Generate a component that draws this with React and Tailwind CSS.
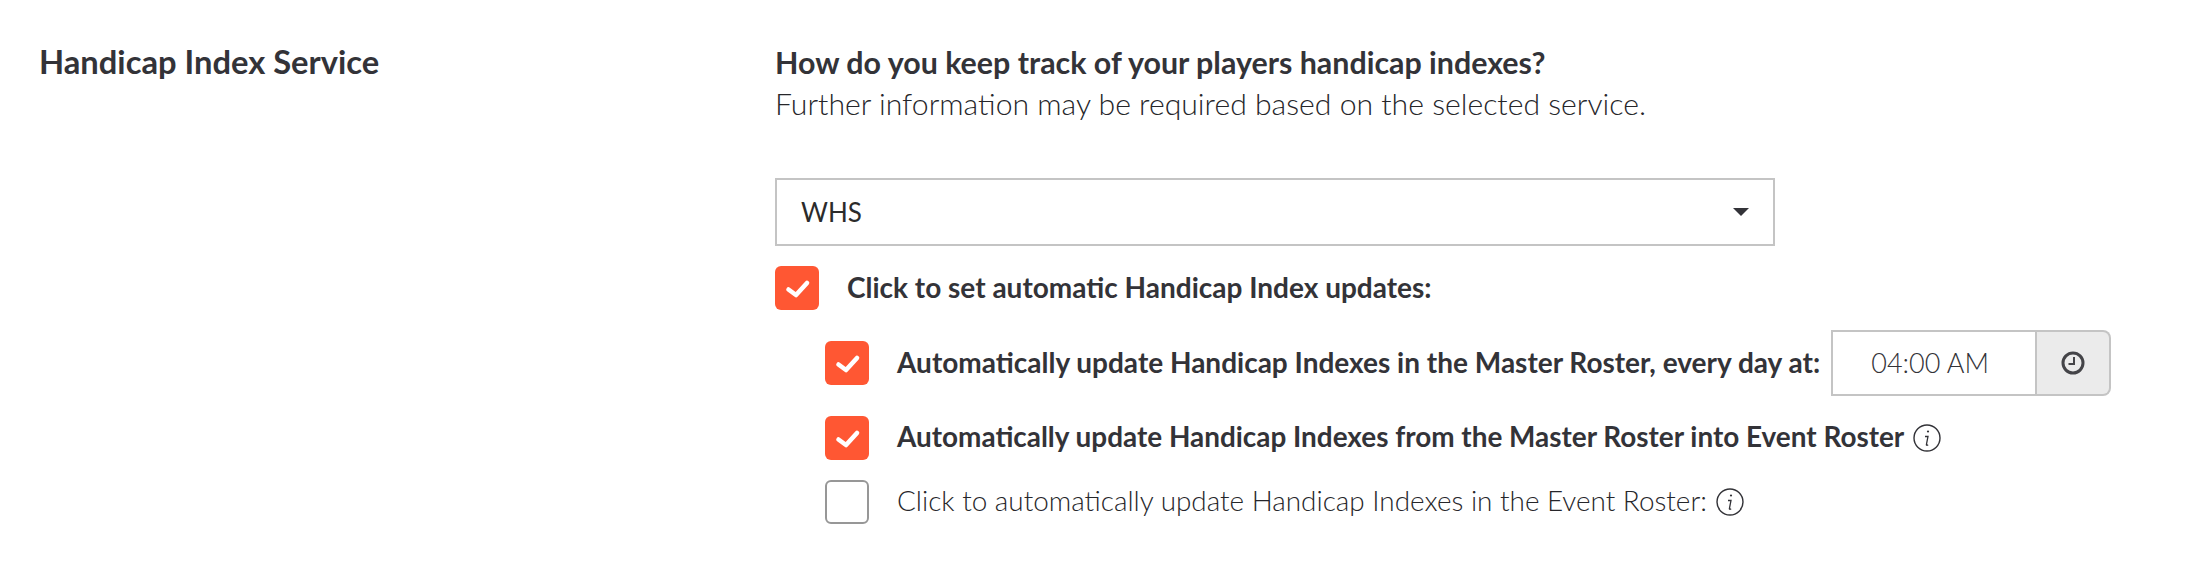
import React from "react";

function CheckBox({ checked }) {
  if (!checked) {
    return <div className="w-[44px] h-[44px] shrink-0 rounded-[6px] border-2 border-[#979797] bg-white" />;
  }
  return (
    <div className="w-[44px] h-[44px] shrink-0 rounded-[6px] bg-[#ff5733]">
      <svg width="44" height="44" viewBox="0 0 44 44">
        <path d="M13.5 23.5l7.5 5.5L32 17" fill="none" stroke="#fff" strokeWidth="4.6" strokeLinecap="round" strokeLinejoin="round" />
      </svg>
    </div>
  );
}

function InfoIcon() {
  return (
    <svg width="28" height="28" viewBox="0 0 28 28" className="shrink-0 text-[#333338]">
      <circle cx="14" cy="14" r="13" fill="none" stroke="currentColor" strokeWidth="1.4" />
      <circle cx="15" cy="7.5" r="1.1" fill="currentColor" />
      <path d="M12 12.5h3l-1.6 8c-.1.8.4 1 1.8.4" fill="none" stroke="currentColor" strokeWidth="1.3" />
    </svg>
  );
}

function App() {
  return (
    <div className="w-[2200px] h-[580px] bg-white flex text-[#333338] font-['Lato','Liberation_Sans',sans-serif]">
      <div className="w-[775px] pl-[39px] pt-[42px]">
        <h2 className="text-[32.7px] leading-[40px] font-bold">Handicap Index Service</h2>
      </div>
      <div className="flex-1 pt-[43px]">
        <p className="text-[30.4px] leading-[38px] font-bold">How do you keep track of your players handicap indexes?</p>
        <p className="text-[30.2px] leading-[38px] font-light text-[#26262a] mt-[3px]">
          Further information may be required based on the selected service.
        </p>
        <div className="w-[1000px] h-[68px] mt-[56px] border-2 border-[#c4c4c4] flex items-center justify-between pl-[24px] pr-[24px]">
          <span className="text-[26px] text-[#2b2b2b]">WHS</span>
          <svg width="16" height="8" viewBox="0 0 16 8" className="text-[#333338]">
            <path d="M0 0h16L8 8z" fill="currentColor" />
          </svg>
        </div>
        <div className="flex items-center mt-[20px] h-[44px]">
          <CheckBox checked />
          <span className="ml-[28px] text-[28px] font-bold -translate-y-px">Click to set automatic Handicap Index updates:</span>
        </div>
        <div className="ml-[50px]">
          <div className="flex items-center mt-[20px] h-[66px]">
            <CheckBox checked />
            <span className="ml-[28px] text-[28px] font-bold whitespace-nowrap -translate-y-px">
              Automatically update Handicap Indexes in the Master Roster, every day at:
            </span>
            <div className="ml-[11px] flex h-[66px] w-[280px] shrink-0">
              <div className="w-[206px] border-2 border-[#c4c4c4] flex items-center justify-center pr-[8px] text-[27px] font-light text-[#333338]">
                04:00 AM
              </div>
              <div className="flex-1 border-2 border-l-0 border-[#c4c4c4] bg-[#ebebeb] rounded-r-[8px] flex items-center justify-center">
                <svg width="24" height="24" viewBox="0 0 24 24" className="text-[#444448]">
                  <circle cx="12" cy="12" r="10" fill="none" stroke="currentColor" strokeWidth="3" />
                  <path d="M13 6v7H7.5" fill="none" stroke="currentColor" strokeWidth="2" />
                </svg>
              </div>
            </div>
          </div>
          <div className="flex items-center mt-[20px] h-[44px]">
            <CheckBox checked />
            <span className="ml-[28px] text-[27.9px] font-bold whitespace-nowrap -translate-y-px">
              Automatically update Handicap Indexes from the Master Roster into Event Roster
            </span>
            <span className="ml-[9px] flex"><InfoIcon /></span>
          </div>
          <div className="flex items-center mt-[20px] h-[44px]">
            <CheckBox />
            <span className="ml-[28px] text-[27.9px] font-light text-[#26262a] whitespace-nowrap -translate-y-px">
              Click to automatically update Handicap Indexes in the Event Roster:
            </span>
            <span className="ml-[9px] flex"><InfoIcon /></span>
          </div>
        </div>
      </div>
    </div>
  );
}

export default App;
